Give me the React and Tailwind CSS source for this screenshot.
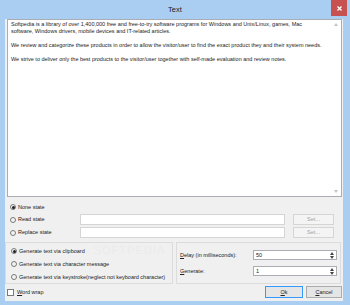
import React from 'react';

const font = { fontFamily: '"Liberation Sans", Arial, sans-serif' };

const Radio = ({ checked, label }) => (
  <div className="flex items-center h-full">
    <span className="w-[6px] h-[6px] rounded-full border border-[#7a7a7a] bg-[#f4f4f4] flex items-center justify-center shrink-0">
      {checked && <span className="w-[3px] h-[3px] rounded-full bg-[#222]" />}
    </span>
    <span className="ml-[2px] text-[5.5px] text-[#222] whitespace-nowrap">{label}</span>
  </div>
);

const SetButton = () => (
  <div className="w-[41px] h-full border border-[#d5d5d5] bg-[#f4f4f4] flex items-center justify-center text-[5.5px] text-[#a3a3a3]">
    Set...
  </div>
);

const Spinner = () => (
  <div className="flex flex-col items-center gap-[1px] mr-[2px]">
    <svg width="4" height="3" viewBox="0 0 4 3"><path d="M0 3 L2 0 L4 3 Z" fill="#444" /></svg>
    <svg width="4" height="3" viewBox="0 0 4 3"><path d="M0 0 L2 3 L4 0 Z" fill="#444" /></svg>
  </div>
);

const lines = [
  'Softpedia is a library of over 1,400,000 free and free-to-try software programs for Windows and Unix/Linux, games, Mac',
  'software, Windows drivers, mobile devices and IT-related articles.',
  '',
  'We review and categorize these products in order to allow the visitor/user to find the exact product they and their system needs.',
  '',
  'We strive to deliver only the best products to the visitor/user together with self-made evaluation and review notes.',
];

export default function App() {
  return (
    <div className="w-[350px] h-[305px] bg-[#aacdf2] flex flex-col overflow-hidden" style={font}>
      {/* Title bar */}
      <div className="relative h-[19px] flex items-center justify-center shrink-0">
        <span className="text-[7.5px] text-[#222]">Text</span>
        <div className="absolute right-[3px] top-0 w-[16px] h-[16px] bg-[#c75050] flex items-center justify-center">
          <svg width="5" height="5" viewBox="0 0 5 5">
            <path d="M0.5 0.5 L4.5 4.5 M4.5 0.5 L0.5 4.5" stroke="#fff" strokeWidth="1.3" />
          </svg>
        </div>
      </div>

      {/* Client area */}
      <div className="flex-1 ml-[5px] mr-[7px] mb-[4px] bg-[#f0f0f0] flex flex-col">
        {/* Text box */}
        <div className="ml-[2px] mr-[1px] h-[178px] bg-white border border-[#abadb3] flex shrink-0">
          <div className="flex-1 pl-[3px] pt-[1px] text-[5.5px] leading-[7px] text-[#222]">
            {lines.map((l, i) => (
              <div key={i} className="whitespace-nowrap h-[7px]">{l}</div>
            ))}
          </div>
          <div className="w-[10px] flex flex-col items-center justify-between py-[3px]">
            <svg width="4" height="3" viewBox="0 0 4 3"><path d="M0 3 L2 0 L4 3 Z" fill="#c2c2c2" /></svg>
            <svg width="4" height="3" viewBox="0 0 4 3"><path d="M0 0 L2 3 L4 0 Z" fill="#c2c2c2" /></svg>
          </div>
        </div>

        {/* State options */}
        <div className="mt-[4px] pl-[5px] flex flex-col">
          <div className="h-[12px]">
            <Radio checked label="None state" />
          </div>
          <div className="h-[11px] mt-[1px] flex">
            <div className="w-[70px]"><Radio label="Read state" /></div>
            <div className="w-[205px] bg-white border border-[#d5d5d5]" />
            <div className="ml-[8px]"><SetButton /></div>
          </div>
          <div className="h-[11px] mt-[2px] flex">
            <div className="w-[70px]"><Radio label="Replace state" /></div>
            <div className="w-[205px] bg-white border border-[#d5d5d5]" />
            <div className="ml-[8px]"><SetButton /></div>
          </div>
        </div>

        {/* Groups */}
        <div className="mt-[4px] h-[42px] flex shrink-0">
          <div className="relative w-[168px] border border-[#dcdcdc] pl-[5px] pt-[2px] flex flex-col gap-[1px]">
            <div className="h-[12px]"><Radio checked label="Generate text via clipboard" /></div>
            <div className="h-[12px]"><Radio label="Generate text via character message" /></div>
            <div className="h-[12px]"><Radio label="Generate text via keystroke(neglect not keyboard character)" /></div>
            <span className="absolute left-[88px] top-[-1px] text-[11px] tracking-[1px] text-[#ebebeb] pointer-events-none">SOFTPEDIA</span>
          </div>
          <div className="ml-[3px] mr-[2px] flex-1 border border-[#dcdcdc] pl-[3px] pr-[3px] pt-[7px] flex flex-col gap-[6px]">
            <div className="h-[10px] flex items-center">
              <span className="w-[73px] text-[5.5px] text-[#222] whitespace-nowrap"><u>D</u>elay (in milliseconds):</span>
              <div className="flex-1 h-full bg-white border border-[#abadb3] flex items-center justify-between pl-[2px]">
                <span className="text-[5.5px] text-[#222]">50</span>
                <Spinner />
              </div>
            </div>
            <div className="h-[10px] flex items-center">
              <span className="w-[73px] text-[5.5px] text-[#222]"><u>G</u>enerate:</span>
              <div className="flex-1 h-full bg-white border border-[#abadb3] flex items-center justify-between pl-[2px]">
                <span className="text-[5.5px] text-[#222]">1</span>
                <Spinner />
              </div>
            </div>
          </div>
        </div>

        {/* Bottom row */}
        <div className="mt-[2px] h-[12px] flex items-center shrink-0">
          <div className="ml-[2px] w-[7px] h-[7px] border border-[#7a7a7a] bg-white" />
          <span className="ml-[3px] text-[5.5px] text-[#222]"><u>W</u>ord wrap</span>
          <div className="ml-auto w-[38px] h-full border border-[#3399ff] bg-[#e5e5e5] flex items-center justify-center text-[5.5px] text-[#222]">
            <span><u>O</u>k</span>
          </div>
          <div className="ml-[3px] mr-[1px] w-[36px] h-full border border-[#acacac] bg-[#e5e5e5] flex items-center justify-center text-[5.5px] text-[#222]">
            <span><u>C</u>ancel</span>
          </div>
        </div>
      </div>
    </div>
  );
}
